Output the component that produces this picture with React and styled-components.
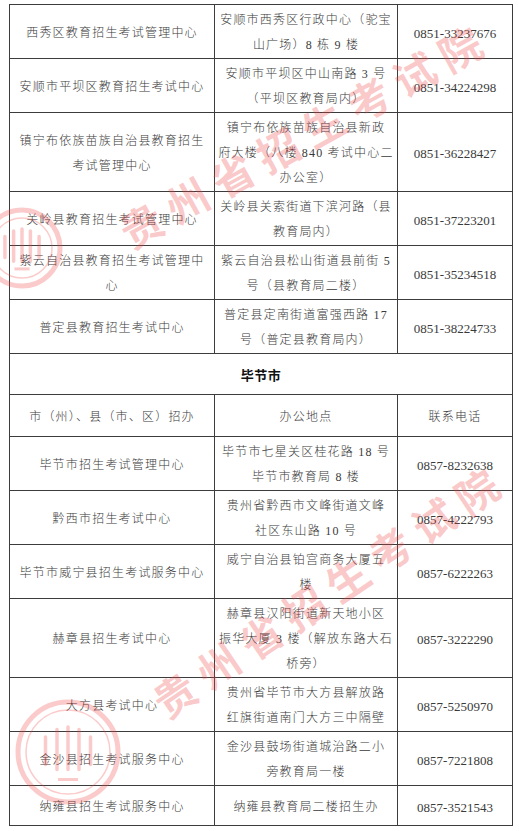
import styled, { createGlobalStyle } from "styled-components";

const GlobalStyle = createGlobalStyle`
  html, body {
    margin: 0;
    padding: 0;
    background: #fff;
  }
`;

const Page = styled.div`
  position: relative;
  width: 519px;
  height: 831px;
  overflow: hidden;
  padding: 4px 0 0 9px;
  box-sizing: border-box;
  background: #fff;
`;

const Table = styled.table`
  width: 503px;
  border-collapse: collapse;
  table-layout: fixed;
  font-family: "Liberation Serif", "Noto Sans CJK SC", serif;
  font-size: 12px;
  font-weight: 300;
  color: #3a3a3a;
`;

const Row = styled.tr`
  height: ${(p) => p.$h}px;
`;

const Cell = styled.td`
  border: 1px solid #3c3c3c;
  text-align: center;
  vertical-align: middle;
  padding: 3px 2px 0 2px;
  line-height: 25px;
  letter-spacing: 1.2px;
`;

const Phone = styled(Cell)`
  font-size: 13px;
  letter-spacing: 0;
`;

const Section = styled.td`
  border: 1px solid #3c3c3c;
  text-align: center;
  vertical-align: middle;
  font-family: "Noto Sans CJK SC", sans-serif;
  font-weight: 700;
  font-size: 13px;
  color: #111;
  letter-spacing: 0.5px;
`;

const Line = styled.span`
  display: block;
  white-space: nowrap;
`;

const Watermark = styled.div`
  position: absolute;
  left: ${(p) => p.$x}px;
  top: ${(p) => p.$y}px;
  width: 440px;
  margin-left: -220px;
  margin-top: -28px;
  height: 56px;
  line-height: 56px;
  text-align: center;
  font-family: "Noto Sans CJK SC", sans-serif;
  font-weight: 700;
  font-size: 42px;
  letter-spacing: 10px;
  text-indent: 10px;
  color: rgba(240, 70, 70, 0.28);
  transform: rotate(${(p) => p.$deg}deg);
  pointer-events: none;
  white-space: nowrap;
`;

const Seal = styled.svg`
  position: absolute;
  left: ${(p) => p.$x}px;
  top: ${(p) => p.$y}px;
  pointer-events: none;
`;

const rows1 = [
  { h: 53, name: ["西秀区教育招生考试管理中心"], addr: ["安顺市西秀区行政中心（驼宝", "山广场）8 栋 9 楼"], phone: "0851-33237676" },
  { h: 53, name: ["安顺市平坝区教育招生考试中心"], addr: ["安顺市平坝区中山南路 3 号", "（平坝区教育局内）"], phone: "0851-34224298" },
  { h: 79, name: ["镇宁布依族苗族自治县教育招生", "考试管理中心"], addr: ["镇宁布依族苗族自治县新政", "府大楼（八楼 840 考试中心二", "办公室）"], phone: "0851-36228427" },
  { h: 53, name: ["关岭县教育招生考试管理中心"], addr: ["关岭县关索街道下滨河路（县", "教育局内）"], phone: "0851-37223201" },
  { h: 53.5, name: ["紫云自治县教育招生考试管理中", "心"], addr: ["紫云自治县松山街道县前街 5", "号（县教育局二楼）"], phone: "0851-35234518" },
  { h: 53.5, name: ["普定县教育招生考试中心"], addr: ["普定县定南街道富强西路 17", "号（普定县教育局内）"], phone: "0851-38224733" },
];

const rows2 = [
  { h: 53, name: ["毕节市招生考试管理中心"], addr: ["毕节市七星关区桂花路 18 号", "毕节市教育局 8 楼"], phone: "0857-8232638" },
  { h: 53, name: ["黔西市招生考试中心"], addr: ["贵州省黔西市文峰街道文峰", "社区东山路 10 号"], phone: "0857-4222793" },
  { h: 53, name: ["毕节市威宁县招生考试服务中心"], addr: ["威宁自治县铂宫商务大厦五", "楼"], phone: "0857-6222263" },
  { h: 79, name: ["赫章县招生考试中心"], addr: ["赫章县汉阳街道新天地小区", "振华大厦 3 楼（解放东路大石", "桥旁）"], phone: "0857-3222290" },
  { h: 53.5, name: ["大方县考试中心"], addr: ["贵州省毕节市大方县解放路", "红旗街道南门大方三中隔壁"], phone: "0857-5250970" },
  { h: 53.5, name: ["金沙县招生考试服务中心"], addr: ["金沙县鼓场街道城治路二小", "旁教育局一楼"], phone: "0857-7221808" },
  { h: 40, name: ["纳雍县招生考试服务中心"], addr: ["纳雍县教育局二楼招生办"], phone: "0857-3521543" },
];

const Lines = ({ items }) => items.map((t, i) => <Line key={i}>{t}</Line>);

const DataRow = ({ r }) => (
  <Row $h={r.h}>
    <Cell>
      <Lines items={r.name} />
    </Cell>
    <Cell>
      <Lines items={r.addr} />
    </Cell>
    <Phone>{r.phone}</Phone>
  </Row>
);

const SealMark = ({ x, y, r }) => (
  <Seal $x={x - r - 4} $y={y - r - 4} width={(r + 4) * 2} height={(r + 4) * 2}>
    <g transform={`translate(${r + 4} ${r + 4})`} stroke="rgba(240,70,70,0.28)" fill="none">
      <circle r={r} strokeWidth="5" />
      <circle r={r - 8} strokeWidth="1.5" />
      <path d={`M${-r * 0.45} ${-r * 0.3} v${r * 0.55} M${-r * 0.22} ${-r * 0.45} v${r * 0.8} M0 ${-r * 0.5} v${r * 0.85} M${r * 0.22} ${-r * 0.45} v${r * 0.8} M${r * 0.45} ${-r * 0.3} v${r * 0.55}`} strokeWidth="3.5" strokeLinecap="round" />
      <path d={`M${-r * 0.2} ${r * 0.55} h${r * 0.4}`} strokeWidth="3" />
    </g>
  </Seal>
);

const App = () => {
  return (
    <>
      <GlobalStyle />
      <Page>
        <Table>
          <colgroup>
            <col style={{ width: 205 }} />
            <col style={{ width: 183 }} />
            <col style={{ width: 115 }} />
          </colgroup>
          <tbody>
            {rows1.map((r, i) => (
              <DataRow key={i} r={r} />
            ))}
            <Row $h={41}>
              <Section colSpan={3}>毕节市</Section>
            </Row>
            <Row $h={42}>
              <Cell>市（州）、县（市、区）招办</Cell>
              <Cell>办公地点</Cell>
              <Cell>联系电话</Cell>
            </Row>
            {rows2.map((r, i) => (
              <DataRow key={i} r={r} />
            ))}
          </tbody>
        </Table>
        <SealMark x={22} y={248} r={38} />
        <SealMark x={68} y={752} r={50} />
        <Watermark $x={300} $y={136} $deg={-29}>贵州省招生考试院</Watermark>
        <Watermark $x={325} $y={592} $deg={-34}>贵州省招生考试院</Watermark>
      </Page>
    </>
  );
};

export default App;
